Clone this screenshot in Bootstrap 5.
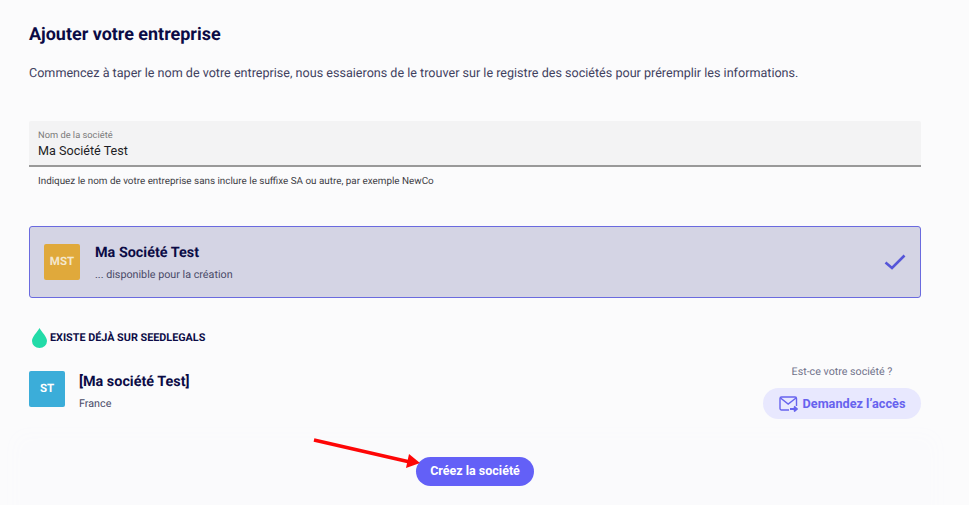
<!DOCTYPE html>
<html lang="fr">
<head>
    <meta charset="UTF-8">
    <meta name="viewport" content="width=device-width, initial-scale=1">
    <title>Ajouter votre entreprise</title>
    <link rel="stylesheet" href="https://cdn.jsdelivr.net/npm/bootstrap@5.3.0/dist/css/bootstrap.min.css">
    <style>
        html, body {
            height: 505px;
            overflow: hidden;
        }

        body {
            background-color: #fbfbfc;
            font-family: Roboto, "Liberation Sans", sans-serif;
            color: #0b0b45;
            position: relative;
            text-rendering: geometricPrecision;
        }

        .page-wrap {
            padding: 25px 48px 0 29px;
        }

        .page-title {
            font-size: 17.95px;
            font-weight: 700;
            line-height: 20px;
            margin: 0 0 19px;
            color: #0b0b45;
        }

        .page-intro {
            font-size: 12.58px;
            line-height: 20px;
            margin: 0 0 37px;
            color: #3f4160;
        }

        .name-field {
            height: 46px;
            background: #f3f3f4;
            border-bottom: 2px solid #999;
            border-radius: 2px 2px 0 0;
            padding: 9px 9px 0;
        }

        .name-field label {
            display: block;
            font-size: 9.3px;
            line-height: 11px;
            color: #7b7b7b;
        }

        .name-field input {
            display: block;
            width: 100%;
            border: 0;
            padding: 1px 0 0;
            background: transparent;
            font-size: 12.6px;
            line-height: 18px;
            color: #1d1d24;
            outline: none;
        }

        .field-help {
            font-size: 9.87px;
            line-height: 12px;
            padding: 9px 0 0 9px;
            margin-bottom: 38px;
            color: #3d3d45;
        }

        .pick-card {
            height: 72px;
            background: #d4d4e4;
            border: 1px solid #6a6adf;
            border-radius: 3px;
            padding: 15px 14px;
            margin-bottom: 30px;
        }

        .logo-box {
            width: 36px;
            height: 36px;
            flex: none;
            border-radius: 2px;
            color: #fff;
            font-size: 11.5px;
            font-weight: 700;
        }

        .logo-amber {
            background: #e0a93b;
            color: #f4e7cd;
        }

        .logo-blue {
            background: #3badd9;
        }

        .card-text {
            margin-left: 15px;
        }

        .row-text {
            margin-left: 14px;
        }

        .co-name {
            font-size: 14.4px;
            font-weight: 700;
            line-height: 18px;
            margin-top: 2px;
            color: #0b0b45;
        }

        .co-sub {
            font-size: 10.75px;
            line-height: 14px;
            margin-top: 6px;
            color: #4a4b68;
        }

        .seed-head {
            font-size: 10.8px;
            font-weight: 700;
            line-height: 20px;
            padding-left: 3px;
            margin-bottom: 23px;
            gap: 3px;
        }

        .access-col {
            width: 158px;
            margin-top: -5px;
        }

        .access-q {
            font-size: 10.7px;
            line-height: 12px;
            color: #70728a;
            margin-bottom: 10px;
        }

        .access-btn {
            width: 158px;
            height: 31px;
            border: 0;
            padding: 0;
            border-radius: 16px;
            background: #e8e8fe;
            color: #6763ee;
            font-size: 12.7px;
            font-weight: 700;
            gap: 5px;
        }

        .bottom-bar {
            position: absolute;
            left: 24px;
            right: 42px;
            top: 444px;
            height: 70px;
            background: #fafafc;
            box-shadow: 0 0 18px 8px #fafafc;
        }

        .create-btn {
            position: absolute;
            left: 416px;
            top: 457px;
            width: 118px;
            height: 29px;
            border: 0;
            padding: 0;
            border-radius: 15px;
            background: #6360f7;
            color: #fff;
            font-size: 12.5px;
            font-weight: 700;
        }

        .red-arrow {
            position: absolute;
            left: 310px;
            top: 435px;
        }
    </style>
</head>
<body>

<div class="page-wrap">
    <h1 class="page-title">Ajouter votre entreprise</h1>
    <p class="page-intro">Commencez à taper le nom de votre entreprise, nous essaierons de le trouver sur le registre des sociétés pour préremplir les informations.</p>

    <div class="name-field">
        <label for="companyName">Nom de la société</label>
        <input id="companyName" type="text" value="Ma Société Test">
    </div>
    <div class="field-help">Indiquez le nom de votre entreprise sans inclure le suffixe SA ou autre, par exemple NewCo</div>

    <div class="pick-card d-flex align-items-center">
        <div class="logo-box logo-amber d-flex align-items-center justify-content-center">MST</div>
        <div class="card-text flex-grow-1">
            <div class="co-name">Ma Société Test</div>
            <div class="co-sub">... disponible pour la création</div>
        </div>
        <svg width="22" height="16" viewBox="0 0 22 16" fill="none" stroke="#5555d8" stroke-width="2.6">
            <path d="M1.5 8.5 L8 14 L20.5 1.5"/>
        </svg>
    </div>

    <div class="seed-head d-flex align-items-center text-uppercase">
        <svg width="15" height="20" viewBox="0 0 15 20">
            <path d="M7.5 0 C9.5 4 15 8.5 15 13 A7.5 7 0 0 1 0 13 C0 8.5 5.5 4 7.5 0 Z" fill="#22dba8"/>
        </svg>
        <span>Existe déjà sur SeedLegals</span>
    </div>

    <div class="d-flex align-items-start">
        <div class="logo-box logo-blue d-flex align-items-center justify-content-center">ST</div>
        <div class="row-text flex-grow-1">
            <div class="co-name">[Ma société Test]</div>
            <div class="co-sub">France</div>
        </div>
        <div class="access-col text-center">
            <div class="access-q">Est-ce votre société ?</div>
            <button type="button" class="access-btn d-flex align-items-center justify-content-center">
                <svg width="19" height="16" viewBox="0 0 19 16" fill="none" stroke="#6763ee" stroke-width="1.4">
                    <path d="M10 14 H2.5 A1.5 1.5 0 0 1 1 12.5 V2.5 A1.5 1.5 0 0 1 2.5 1 H16 A1.5 1.5 0 0 1 17.5 2.5 V10"/>
                    <path d="M1.5 2 L9.2 8 L17 2"/>
                    <path d="M11 13 H17 M15 10.5 L17.8 13 L15 15.5" stroke-width="1.8"/>
                </svg>
                <span>Demandez l’accès</span>
            </button>
        </div>
    </div>
</div>

<div class="bottom-bar"></div>
<button type="button" class="create-btn">Créez la société</button>

<svg class="red-arrow" width="115" height="36" viewBox="0 0 115 36">
    <path d="M4 5 L102 27.5" stroke="#fe0606" stroke-width="3.4" fill="none"/>
    <path d="M110 28 L99 19 L96 33 Z" fill="#fe0606"/>
</svg>

<script src="https://cdn.jsdelivr.net/npm/bootstrap@5.3.0/dist/js/bootstrap.bundle.min.js"></script>
</body>
</html>
